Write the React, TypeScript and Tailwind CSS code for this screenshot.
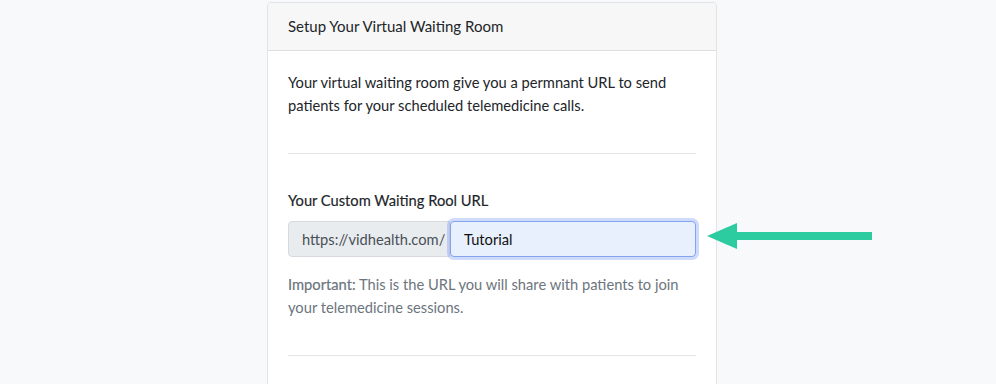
import React from "react";

export default function App() {
  return (
    <div
      className="relative w-[996px] h-[384px] overflow-hidden bg-[#f8f9fb]"
      style={{ fontFamily: "Lato, 'Open Sans', sans-serif" }}
    >
      <div className="ml-[267px] mt-[2px] w-[450px] h-[420px] bg-white border border-[#e1e3e6] rounded-[4px]">
        <div className="h-[48px] bg-[#f7f7f7] border-b border-[#dfdfdf] rounded-t-[4px] px-[20px] flex items-center text-[15px] text-[#212529]">
          Setup Your Virtual Waiting Room
        </div>
        <div className="px-[20px] pt-[20px]">
          <p className="text-[14.7px] leading-[23px] text-[#212529]">
            Your virtual waiting room give you a permnant URL to send patients for your scheduled telemedicine calls.
          </p>
          <hr className="mt-[36px] border-t border-[#e5e5e5]" />
          <div className="mt-[35px] text-[14.7px] leading-[23px] font-normal text-[#212529] [-webkit-text-stroke:0.15px_#212529]">
            Your Custom Waiting Rool URL
          </div>
          <div className="mt-[9px] flex h-[36px]">
            <div className="w-[162px] flex items-center pl-[13px] bg-[#e9ecef] border border-[#d6dade] rounded-l-[4px] text-[14.7px] text-[#495057]">
              https://vidhealth.com/
            </div>
            <div className="flex-1 flex items-center pl-[13px] bg-[#e8f0fe] border border-[#80a4f0] rounded-[4px] shadow-[0_0_0_3px_rgba(120,150,240,0.35)] text-[14.7px] text-[#111]">
              Tutorial
            </div>
          </div>
          <p className="mt-[16px] text-[14.7px] leading-[23px] text-[#6c757d] [-webkit-text-stroke:0.15px_transparent]">
            <span className="[-webkit-text-stroke:0.2px_#6c757d]">Important:</span> This is the URL you will share with patients to join your telemedicine sessions.
          </p>
          <hr className="mt-[36px] border-t border-[#e5e5e5]" />
        </div>
      </div>
      <svg className="absolute left-[705px] top-[220px]" width="170" height="32" viewBox="0 0 170 32">
        <polygon points="2,16 32,3 32,12 167,12 167,20 32,20 32,29" fill="#2ccba0" />
      </svg>
    </div>
  );
}
